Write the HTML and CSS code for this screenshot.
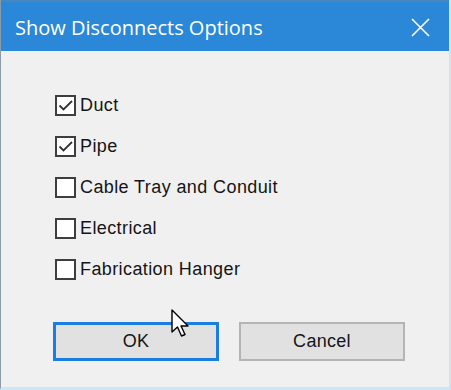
FILE: index.html
```html
<!DOCTYPE html>
<html>
<head>
<meta charset="utf-8">
<link rel="stylesheet" href="styles.css">
</head>
<body>
<div class="dialog">
  <div class="titlebar">
    <span class="title">Show Disconnects Options</span>
    <svg class="close" width="19" height="19" viewBox="0 0 19 19"><path d="M1 1 L18 18 M18 1 L1 18" stroke="#fff" stroke-width="1.6" fill="none"/></svg>
  </div>
  <div class="content">
    <div class="options">
      <label class="opt"><span class="box"><svg width="17" height="17" viewBox="0 0 17 17"><path d="M2.5 8.5 L6.5 12.5 L15 4" stroke="#333" stroke-width="1.8" fill="none"/></svg></span><span>Duct</span></label>
      <label class="opt"><span class="box"><svg width="17" height="17" viewBox="0 0 17 17"><path d="M2.5 8.5 L6.5 12.5 L15 4" stroke="#333" stroke-width="1.8" fill="none"/></svg></span><span>Pipe</span></label>
      <label class="opt"><span class="box"></span><span>Cable Tray and Conduit</span></label>
      <label class="opt"><span class="box"></span><span>Electrical</span></label>
      <label class="opt"><span class="box"></span><span>Fabrication Hanger</span></label>
    </div>
    <div class="buttons">
      <div class="btn primary">OK</div>
      <div class="btn">Cancel</div>
    </div>
  </div>
  <svg class="cursor" width="20" height="30" viewBox="0 0 20 30"><path d="M1 1 L1 23 L6.5 18 L10.5 27 L14 25.5 L10 17 L17 17 Z" fill="#fff" stroke="#000" stroke-width="1.4" stroke-linejoin="round"/></svg>
</div>
</body>
</html>
```
FILE: styles.css
```css
html, body {
  margin: 0;
  padding: 0;
  background: #f0f0f0;
}
.dialog {
  position: relative;
  width: 451px;
  height: 390px;
  box-sizing: border-box;
  background: #f0f0f0;
  border-left: 1px solid #8a9aa8;
  border-right: 2px solid #cfe3f3;
  border-bottom: 3px solid #cbe6f7;
  overflow: hidden;
  font-family: "Liberation Sans", Arial, sans-serif;
  color: #151515;
}
.titlebar {
  height: 51px;
  background: #2b88d8;
  border-top: 2px solid #4a86bd;
  box-sizing: border-box;
  display: flex;
  align-items: center;
  justify-content: space-between;
  padding: 0 19px 0 14px;
}
.title {
  font-family: "Open Sans", "Noto Sans", sans-serif;
  font-size: 20px;
  color: #fff;
  padding-top: 1px;
}
.close {
  display: block;
  margin-top: 1px;
}
.content {
  padding: 44px 0 0 54px;
}
.options {
  display: flex;
  flex-direction: column;
  gap: 20px;
}
.opt {
  display: flex;
  align-items: center;
  height: 21px;
  gap: 4px;
  font-size: 18px;
  letter-spacing: 0.4px;
}
.box {
  width: 21px;
  height: 21px;
  box-sizing: border-box;
  border: 2px solid #3e3e3e;
  background: #fff;
  display: flex;
  align-items: center;
  justify-content: center;
}
.box svg {
  display: block;
}
.buttons {
  display: flex;
  gap: 20px;
  margin-top: 42px;
  margin-left: -2px;
}
.btn {
  width: 166px;
  height: 39px;
  box-sizing: border-box;
  background: #e1e1e1;
  border: 2px solid #b4b4b4;
  display: flex;
  align-items: center;
  justify-content: center;
  font-size: 18px;
  letter-spacing: 0.3px;
}
.btn.primary {
  border: 3px solid #1a7ee0;
}
.cursor {
  position: absolute;
  left: 170px;
  top: 309px;
}
```
